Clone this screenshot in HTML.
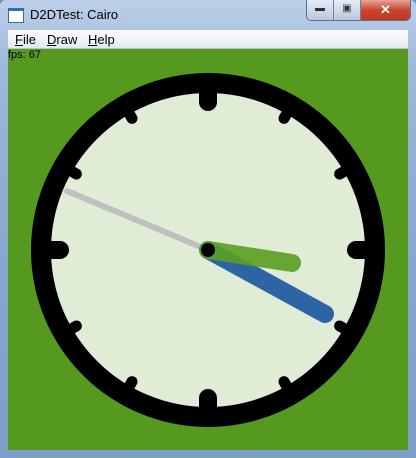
<!DOCTYPE html>
<html><head><style>
body{margin:0;width:416px;height:458px;overflow:hidden;background:#6d93c0;font-family:"Liberation Sans",sans-serif}
.win{position:absolute;left:0;top:0;width:416px;height:458px;background:linear-gradient(180deg,#bcd0e8 0%,#9db8da 15%,#86a6cf 60%,#7d9ec8 100%);border-radius:6px 6px 0 0}
.title{position:absolute;left:30px;top:7px;font-size:13px;color:#000}
.icon{position:absolute;left:8px;top:8px;width:14px;height:11px;border:1px solid #3a68b0;border-top:3px solid #3a68b0;background:#fff}
.btns{position:absolute;left:306px;top:0;width:103px;height:20px;border:1px solid #5c6f8c;border-top:none;border-radius:0 0 5px 5px;overflow:hidden;display:flex}
.b{width:26px;height:20px;background:linear-gradient(#e6edf6,#b8c9de);border-right:1px solid #6e819d;color:#333;font-size:10px;text-align:center;line-height:18px}
.x{width:49px;height:20px;background:linear-gradient(#e8a597,#c8452f 50%,#c0381f);color:#fff;font-weight:bold;font-size:13px;text-align:center;line-height:19px}
.menu{position:absolute;left:8px;top:30px;width:400px;height:18px;background:linear-gradient(#fdfdfe,#e4e9f2);border-bottom:1px solid #b9c3d3;font-size:13px}
.menu span{position:absolute;top:2px}
.client{position:absolute;left:8px;top:49px;width:400px;height:401px;background:#559a1e}
.fps{position:absolute;left:0;top:0;font-size:11px;color:#000}
</style></head><body>
<div class="win">
<div class="icon"></div>
<div class="title">D2DTest: Cairo</div>
<div class="btns"><div class="b">▬</div><div class="b">▣</div><div class="x">✕</div></div>
<div class="menu"><span style="left:7px"><u>F</u>ile</span><span style="left:39px"><u>D</u>raw</span><span style="left:80px"><u>H</u>elp</span></div>
<div class="client"><div class="fps">fps: 67</div>
<svg width="400" height="401" style="position:absolute;left:0;top:0">
<g transform="translate(200,201)">
<circle r="177" fill="#000"/>
<circle r="157" fill="#e0ecd6"/>
<g stroke="#000" stroke-linecap="round">
<g stroke-width="18">
<line x1="0" y1="-158" x2="0" y2="-148"/>
<line x1="0" y1="158" x2="0" y2="148"/>
<line x1="-158" y1="0" x2="-148" y2="0"/>
<line x1="158" y1="0" x2="148" y2="0"/>
</g>
<g stroke-width="11">
<g transform="rotate(30)"><line y1="-158" y2="-152"/></g>
<g transform="rotate(60)"><line y1="-158" y2="-152"/></g>
<g transform="rotate(120)"><line y1="-158" y2="-152"/></g>
<g transform="rotate(150)"><line y1="-158" y2="-152"/></g>
<g transform="rotate(210)"><line y1="-158" y2="-152"/></g>
<g transform="rotate(240)"><line y1="-158" y2="-152"/></g>
<g transform="rotate(300)"><line y1="-158" y2="-152"/></g>
<g transform="rotate(330)"><line y1="-158" y2="-152"/></g>
</g>
</g>
<line x1="-141" y1="-59" x2="0" y2="0" stroke="#c0c0c0" stroke-width="6" stroke-linecap="round"/>
<line x1="0" y1="0" x2="117" y2="64" stroke="#2f64a4" stroke-width="18" stroke-linecap="round"/>
<line x1="0" y1="0" x2="84" y2="13" stroke="#5a9f22" stroke-opacity="0.9" stroke-width="18" stroke-linecap="round"/>
<circle r="7" fill="#000"/>
</g>
</svg>
</div>
</div>
</body></html>
